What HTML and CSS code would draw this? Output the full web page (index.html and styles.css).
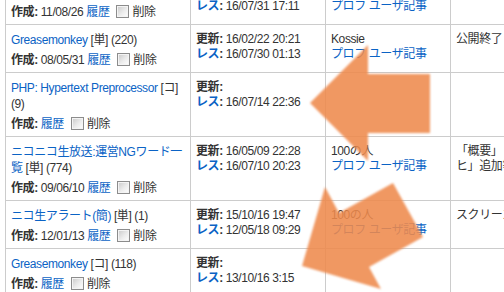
FILE: index.html
```html
<!DOCTYPE html>
<html lang="ja">
<head>
<meta charset="utf-8">
<title>スクリプト一覧</title>
<link rel="stylesheet" href="styles.css">
</head>
<body>
<div class="page">
  <table class="list">
    <colgroup>
      <col class="c1"><col class="c2"><col class="c3"><col class="c4">
    </colgroup>
    <tbody>
      <tr>
        <td>
          <div class="title"><a href="#">Userscript</a> [単] (12)</div>
          <div class="meta"><b>作成:</b> 11/08/26 <a href="#">履歴</a> <span class="cb"></span>削除</div>
        </td>
        <td>
          <div class="ln"><b>更新:</b> 16/07/31 17:11</div>
          <div class="ln"><a href="#" class="lbl">レス</a><b>:</b> 16/07/31 17:11</div>
        </td>
        <td>
          <div class="ln">名無し</div>
          <div class="ln"><a href="#">プロフ</a> <a href="#">ユーザ記事</a></div>
        </td>
        <td></td>
      </tr>
      <tr>
        <td>
          <div class="title"><a href="#">Greasemonkey</a> [単] (220)</div>
          <div class="meta"><b>作成:</b> 08/05/31 <a href="#">履歴</a> <span class="cb"></span>削除</div>
        </td>
        <td>
          <div class="ln"><b>更新:</b> 16/02/22 20:21</div>
          <div class="ln"><a href="#" class="lbl">レス</a><b>:</b> 16/07/30 01:13</div>
        </td>
        <td>
          <div class="ln">Kossie</div>
          <div class="ln"><a href="#">プロフ</a> <a href="#">ユーザ記事</a></div>
        </td>
        <td><div class="ln">公開終了</div></td>
      </tr>
      <tr>
        <td>
          <div class="title"><a href="#">PHP: Hypertext Preprocessor</a> [コ] (9)</div>
          <div class="meta"><b>作成:</b> <a href="#">履歴</a> <span class="cb"></span>削除</div>
        </td>
        <td>
          <div class="ln"><b>更新:</b></div>
          <div class="ln"><a href="#" class="lbl">レス</a><b>:</b> 16/07/14 22:36</div>
        </td>
        <td></td>
        <td></td>
      </tr>
      <tr>
        <td>
          <div class="title"><a href="#">ニコニコ生放送:運営NGワード一覧</a> [単] (774)</div>
          <div class="meta"><b>作成:</b> 09/06/10 <a href="#">履歴</a> <span class="cb"></span>削除</div>
        </td>
        <td>
          <div class="ln"><b>更新:</b> 16/05/09 22:28</div>
          <div class="ln"><a href="#" class="lbl">レス</a><b>:</b> 16/07/10 20:23</div>
        </td>
        <td>
          <div class="ln">100の人</div>
          <div class="ln"><a href="#">プロフ</a> <a href="#">ユーザ記事</a></div>
        </td>
        <td><div class="ln wrap">「概要」「注意事項」「コツ・ヒ」追加等</div></td>
      </tr>
      <tr>
        <td>
          <div class="title"><a href="#">ニコ生アラート(簡)</a> [単] (1)</div>
          <div class="meta"><b>作成:</b> 12/01/13 <a href="#">履歴</a> <span class="cb"></span>削除</div>
        </td>
        <td>
          <div class="ln"><b>更新:</b> 15/10/16 19:47</div>
          <div class="ln"><a href="#" class="lbl">レス</a><b>:</b> 12/05/18 09:29</div>
        </td>
        <td>
          <div class="ln">100の人</div>
          <div class="ln"><a href="#">プロフ</a> <a href="#">ユーザ記事</a></div>
        </td>
        <td><div class="ln wrap">スクリーンショット追加</div></td>
      </tr>
      <tr>
        <td>
          <div class="title"><a href="#">Greasemonkey</a> [コ] (118)</div>
          <div class="meta"><b>作成:</b> <a href="#">履歴</a> <span class="cb"></span>削除</div>
        </td>
        <td>
          <div class="ln"><b>更新:</b></div>
          <div class="ln"><a href="#" class="lbl">レス</a><b>:</b> 13/10/16 3:15</div>
        </td>
        <td></td>
        <td></td>
      </tr>
    </tbody>
  </table>

  <svg class="arrows" width="504" height="292" viewBox="0 0 504 292" aria-hidden="true">
    <polygon class="arrow" points="310,103 368,45 368,74 430,74 430,133 368,133 368,161"/>
    <polygon class="arrow" points="302,266 325,187 339,213 393,183 423,237 369,267 381,289"/>
  </svg>
</div>
</body>
</html>
```

FILE: styles.css
```css
html, body {
  margin: 0;
  padding: 0;
  overflow: hidden;
  background: #ffffff;
}

body {
  font-family: "Liberation Sans", "Noto Sans CJK JP", sans-serif;
  font-size: 12px;
  letter-spacing: -0.4px;
  color: #333333;
  text-spacing-trim: space-all;
}

.page {
  position: relative;
  width: 504px;
  height: 292px;
  overflow: hidden;
}

a {
  color: #0b63c5;
  text-decoration: none;
}

b {
  font-weight: 700;
}

.list {
  border-collapse: collapse;
  table-layout: fixed;
  width: 625px;
  margin: -24px 0 0 5px;
}

.c1 { width: 185px; }
.c2 { width: 135px; }
.c3 { width: 125px; }
.c4 { width: 180px; }

.list td {
  border: 1px solid #cccccc;
  vertical-align: top;
  padding: 7px 5px 4px 5px;
}

.title {
  line-height: 16px;
}

.meta {
  margin-top: 4px;
  line-height: 16px;
  white-space: nowrap;
}

.cb {
  display: inline-block;
  box-sizing: border-box;
  width: 13px;
  height: 13px;
  margin: 0 3px 0 4px;
  vertical-align: -2px;
  border: 1px solid #8c8c8c;
  background: linear-gradient(135deg, #c9c9c9 0%, #ececec 55%, #ffffff 100%);
  box-shadow: inset 0 0 0 1px #f4f4f4;
}

.ln {
  line-height: 15px;
  white-space: nowrap;
}

.ln.wrap {
  white-space: normal;
  line-break: strict;
}

.lbl {
  font-weight: 700;
}

.arrows {
  position: absolute;
  left: 0;
  top: 0;
  pointer-events: none;
  filter: blur(1px);
}

.arrow {
  fill: #ee8a4c;
  fill-opacity: 0.88;
}
```
